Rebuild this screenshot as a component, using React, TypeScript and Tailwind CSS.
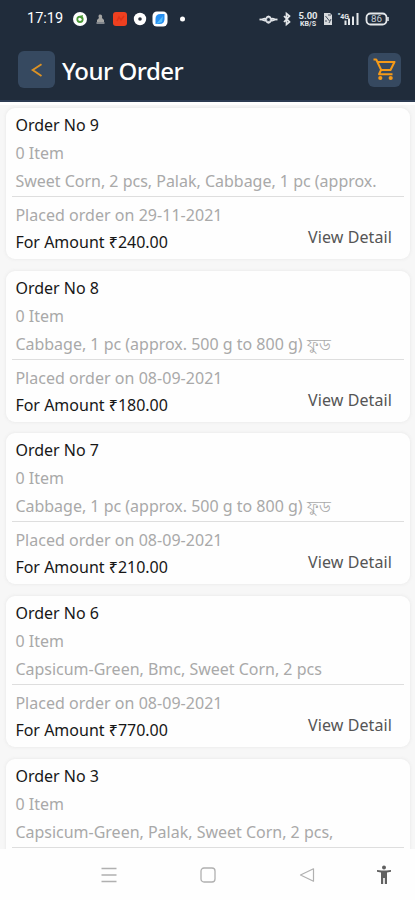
import React from 'react';

interface Order {
  no: number;
  items: string;
  date?: string;
  amount?: string;
}

const orders: Order[] = [
  { no: 9, items: 'Sweet Corn, 2 pcs, Palak, Cabbage, 1 pc (approx.', date: '29-11-2021', amount: '240.00' },
  { no: 8, items: 'Cabbage, 1 pc (approx. 500 g to 800 g) ফুড', date: '08-09-2021', amount: '180.00' },
  { no: 7, items: 'Cabbage, 1 pc (approx. 500 g to 800 g) ফুড', date: '08-09-2021', amount: '210.00' },
  { no: 6, items: 'Capsicum-Green, Bmc, Sweet Corn, 2 pcs', date: '08-09-2021', amount: '770.00' },
  { no: 3, items: 'Capsicum-Green, Palak, Sweet Corn, 2 pcs,' },
];

const StatusBar: React.FC = () => (
  <div className="h-[38px] pl-[27px] pr-[26px] flex items-center justify-between text-white">
    <div className="flex items-center">
      <span className="w-[46px] font-['Roboto',sans-serif] text-[14.5px] leading-none whitespace-nowrap">17:19</span>
      <svg className="w-[116px] h-[18px]" viewBox="0 0 116 18">
        {/* Notifications */}
        <circle cx="7" cy="9" r="7" fill="#fff" />
        <circle cx="7" cy="9.3" r="2.7" fill="none" stroke="#4d9b3a" strokeWidth="1.8" />
        <path d="M5 6.5l5-1.5-1 4" fill="#4d9b3a" />
        <path d="M27 4.5c2 0 2.5 1.5 2 3.5l2 2v2h-7V10l2-2c-1-1.5-.5-3.5 1-3.5z" fill="#a5a5a3" />
        <path d="M23.5 13h8" stroke="#c5c5c5" strokeWidth="1.2" />
        <rect x="40" y="2" width="14" height="14" rx="3" fill="#ee4020" />
        <path d="M44 11l2-4 2 3 3-4" fill="none" stroke="#df3218" strokeWidth="1.5" />
        <circle cx="67" cy="9" r="6.2" fill="#fff" />
        <circle cx="67" cy="9" r="1.8" fill="#2c3440" />
        <rect x="79.5" y="1.5" width="15" height="15" rx="4.5" fill="#fff" />
        <path d="M82.5 14V9q0-5 5-5h4v5q0 5-5 5z" fill="#288ff0" />
        <path d="M83 14l7-8-1 6z" fill="#55bdf8" />
        <circle cx="109.5" cy="9" r="2.5" fill="#fff" />
      </svg>
    </div>
    <svg className="w-[130px] h-[18px]" viewBox="0 0 130 18" fill="none" stroke="#e4e7ea">
      <path d="M.5 9.5h18" strokeWidth="1.8" />
      <path d="M3 9.5q3-2 3.5-.5 3-5.5 6 0 1-1.5 3.5.5-2.5 2-3.5 1-3 5-6 0-1 1-3.5-1z" fill="#b8bfc7" strokeWidth="1.3" />
      <circle cx="9.5" cy="9.5" r="1.5" fill="#202c3b" stroke="none" />
      <path d="M25 6l5.5 6-3 2.5v-11l3 2.5-5.5 6" strokeWidth="1.7" />
      <text x="39.5" y="8.7" textLength="19" lengthAdjust="spacingAndGlyphs" className="font-['Roboto',sans-serif] text-[9.5px] font-bold" fill="#e4e7ea" stroke="none">5.00</text>
      <text x="41" y="16" textLength="16" lengthAdjust="spacingAndGlyphs" className="font-['Roboto',sans-serif] text-[7px] font-bold" fill="#e4e7ea" stroke="none">KB/S</text>
      <path d="M65 3h6l2 2v10h-8z" fill="#d7dadd" stroke="none" />
      <path d="M66.5 6l4 5M66 11h2M69 5h3M70 13l2-4" stroke="#46515e" strokeWidth="1" />
      <text x="79" y="9" textLength="11" lengthAdjust="spacingAndGlyphs" className="font-['Roboto',sans-serif] text-[7.5px] font-bold" fill="#e4e7ea" stroke="none">"4G</text>
      <path d="M86.5 10.5V15M90 8.5V15M94 6.5V15M98.5 3v12" strokeWidth="2" />
      <rect x="107.5" y="3.5" width="20" height="11" rx="4" strokeWidth="1.8" />
      <path d="M129 7v4" strokeWidth="1.5" />
      <text x="112" y="12" textLength="11" lengthAdjust="spacingAndGlyphs" className="font-['Roboto',sans-serif] text-[8.5px]" fill="#c6cbd1" stroke="none">86</text>
    </svg>
  </div>
);

const Header: React.FC = () => (
  <header className="h-[102px] shrink-0 bg-[#202c3b] border-b-2 border-[#2c3b52]">
    <StatusBar />
    <div className="h-[63px] pl-[18px] pr-[14px] flex items-center justify-between">
      <div className="flex items-center">
        <button className="w-[37px] h-[37px] rounded-[6px] bg-[#364960] flex items-center justify-center">
          <svg className="w-5 h-5" viewBox="0 0 20 20" fill="none" stroke="#dc9224" strokeWidth="1.9">
            <path d="M14.5 4.2L5.7 10l8.8 6" />
          </svg>
        </button>
        <h1 className="ml-[7px] mt-[3px] text-[24px] leading-8 font-medium tracking-[-0.5px] text-white whitespace-nowrap">Your Order</h1>
      </div>
      <button className="w-[33px] h-[34px] rounded-[6px] bg-[#364960] flex items-center justify-center">
        <svg className="w-[25px] h-[25px]" viewBox="0 0 25 25" fill="none" stroke="#f59a18" strokeWidth="2" strokeLinejoin="round">
          <path d="M1.500 2.500h2.700l5 10.500h9.300l4-8H5.500M9 13l-2 4.200h13.500" />
          <circle cx="8.3" cy="21" r="2.1" fill="#f59a18" stroke="none" />
          <circle cx="18.7" cy="21" r="2.1" fill="#f59a18" stroke="none" />
        </svg>
      </button>
    </div>
  </header>
);

const OrderCard: React.FC<{ order: Order }> = ({ order }) => (
  <article className="h-[151px] shrink-0 rounded-[9px] bg-[#fefefe] shadow-[0_0_3px_1px_#ededed] pt-[3px] text-[16px] whitespace-nowrap">
    <div className="pl-[9px] leading-[28px] text-[#a9a9a9]">
      <h2 className="text-[#171717]">Order No {order.no}</h2>
      <p>0 Item</p>
      <p className="tracking-[-0.01px]">{order.items}</p>
    </div>
    <div className="mx-[6px] mt-[1px] border-t border-[#dedede]" />
    {order.date && (
      <div className="pl-[9px] pr-[18px] pt-[5px] flex justify-between">
        <div className="leading-[27px] text-[#a9a9a9]">
          <p className="tracking-[0.03px]">Placed order on {order.date}</p>
          <p className="text-[#171717]">For Amount ₹{order.amount}</p>
        </div>
        <button className="h-[27px] mt-[22px] leading-[27px] tracking-[0.1px] text-[#555]">View Detail</button>
      </div>
    )}
  </article>
);

const NavBar: React.FC = () => (
  <nav className="h-[51px] shrink-0 bg-[#fefefe] pl-[101px] pr-[23px] flex items-center text-[#b0b0b0]">
    <svg className="w-4 h-4" viewBox="0 0 16 16" stroke="currentColor" strokeWidth="1.5">
      <path d="M.5 1.5h15M.5 8h15M.5 14.5h15" />
    </svg>
    <svg className="w-4 h-4 ml-[83px]" viewBox="0 0 16 16" fill="none" stroke="currentColor" strokeWidth="1.3">
      <rect x="1" y="1" width="14" height="14" rx="3" />
    </svg>
    <svg className="w-4 h-4 ml-[83px]" viewBox="0 0 16 16" fill="none" stroke="currentColor" strokeWidth="1.2" strokeLinejoin="round">
      <path d="M14.5 1.8v12.4L1.5 8z" />
    </svg>
    <svg className="w-4 h-5 ml-auto" viewBox="0 0 16 20" fill="#606060">
      <circle cx="8" cy="2.5" r="2" />
      <path d="M1 5l4.5.6h5L15 5v1.8l-4 .6V19H8.8v-6H7.200v6H5V7.400l-4-.6z" />
    </svg>
  </nav>
);

const App: React.FC = () => {
  return (
    <div className="w-full h-[900px] flex flex-col overflow-hidden bg-[#f7f7f7] font-['Noto_Sans','Open_Sans',sans-serif]">
      <Header />
      <main className="flex-1 min-h-0 overflow-hidden border-t-[3px] border-white pt-[3.1px] pl-[6.4px] pr-[5px] flex flex-col gap-[11.7px]">
        {orders.map(order => (
          <OrderCard key={order.no} order={order} />
        ))}
      </main>
      <NavBar />
    </div>
  );
};

export default App;
